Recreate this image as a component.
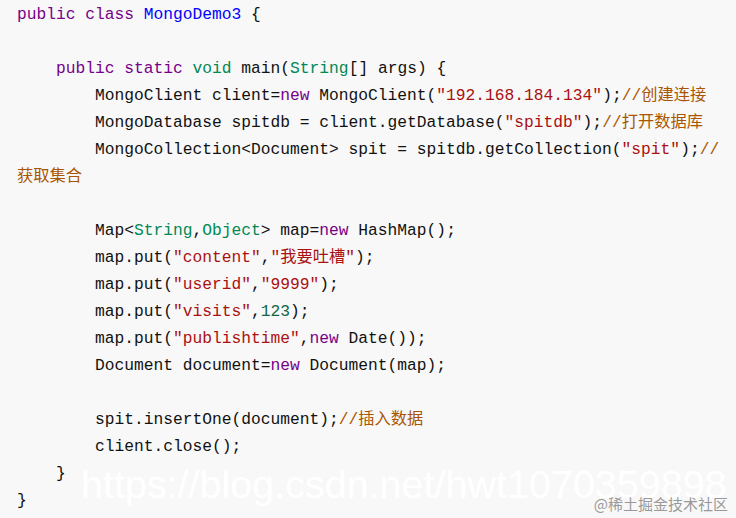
import React from "react";

const K = ({ children }) => <span className="text-[#770088]">{children}</span>;
const D = ({ children }) => <span className="text-[#0000ff]">{children}</span>;
const T = ({ children }) => <span className="text-[#008855]">{children}</span>;
const S = ({ children }) => <span className="text-[#aa1111]">{children}</span>;
const C = ({ children }) => <span className="text-[#aa5500]">{children}</span>;
const N = ({ children }) => <span className="text-[#116644]">{children}</span>;

const Line = ({ children }) => (
  <div className="h-[27px] leading-[27px] whitespace-pre">{children || " "}</div>
);

export default function App() {
  return (
    <div className="relative w-[736px] h-[518px] overflow-hidden bg-[#f8f8f8]">
      <div
        className="pl-[17px] pt-px text-[16.25px] text-[#111]"
        style={{ fontFamily: '"Liberation Mono", "Noto Sans CJK SC", monospace' }}
      >
        <Line><K>public</K> <K>class</K> <D>MongoDemo3</D> {"{"}</Line>
        <Line />
        <Line>{"    "}<K>public</K> <K>static</K> <T>void</T> main(<T>String</T>[] args) {"{"}</Line>
        <Line>{"        "}MongoClient client=<K>new</K> MongoClient(<S>"192.168.184.134"</S>);<C>//创建连接</C></Line>
        <Line>{"        "}MongoDatabase spitdb = client.getDatabase(<S>"spitdb"</S>);<C>//打开数据库</C></Line>
        <Line>{"        "}MongoCollection&lt;Document&gt; spit = spitdb.getCollection(<S>"spit"</S>);<C>//</C></Line>
        <Line><C>获取集合</C></Line>
        <Line />
        <Line>{"        "}Map&lt;<T>String</T>,<T>Object</T>&gt; map=<K>new</K> HashMap();</Line>
        <Line>{"        "}map.put(<S>"content"</S>,<S>"我要吐槽"</S>);</Line>
        <Line>{"        "}map.put(<S>"userid"</S>,<S>"9999"</S>);</Line>
        <Line>{"        "}map.put(<S>"visits"</S>,<N>123</N>);</Line>
        <Line>{"        "}map.put(<S>"publishtime"</S>,<K>new</K> Date());</Line>
        <Line>{"        "}Document document=<K>new</K> Document(map);</Line>
        <Line />
        <Line>{"        "}spit.insertOne(document);<C>//插入数据</C></Line>
        <Line>{"        "}client.close();</Line>
        <Line>{"    "}{"}"}</Line>
        <Line>{"}"}</Line>
      </div>
      <div
        className="absolute left-[81px] top-[465px] text-[39.5px] leading-none text-white whitespace-nowrap"
        style={{ fontFamily: '"Liberation Sans", Arial, sans-serif' }}
      >
        https://blog.csdn.net/hwt1070359898
      </div>
      <div
        className="absolute right-[8px] top-[494px] text-[15px] leading-[20px] text-[#999999] whitespace-nowrap"
        style={{ fontFamily: '"Noto Sans CJK SC", sans-serif' }}
      >
        @稀土掘金技术社区
      </div>
    </div>
  );
}
